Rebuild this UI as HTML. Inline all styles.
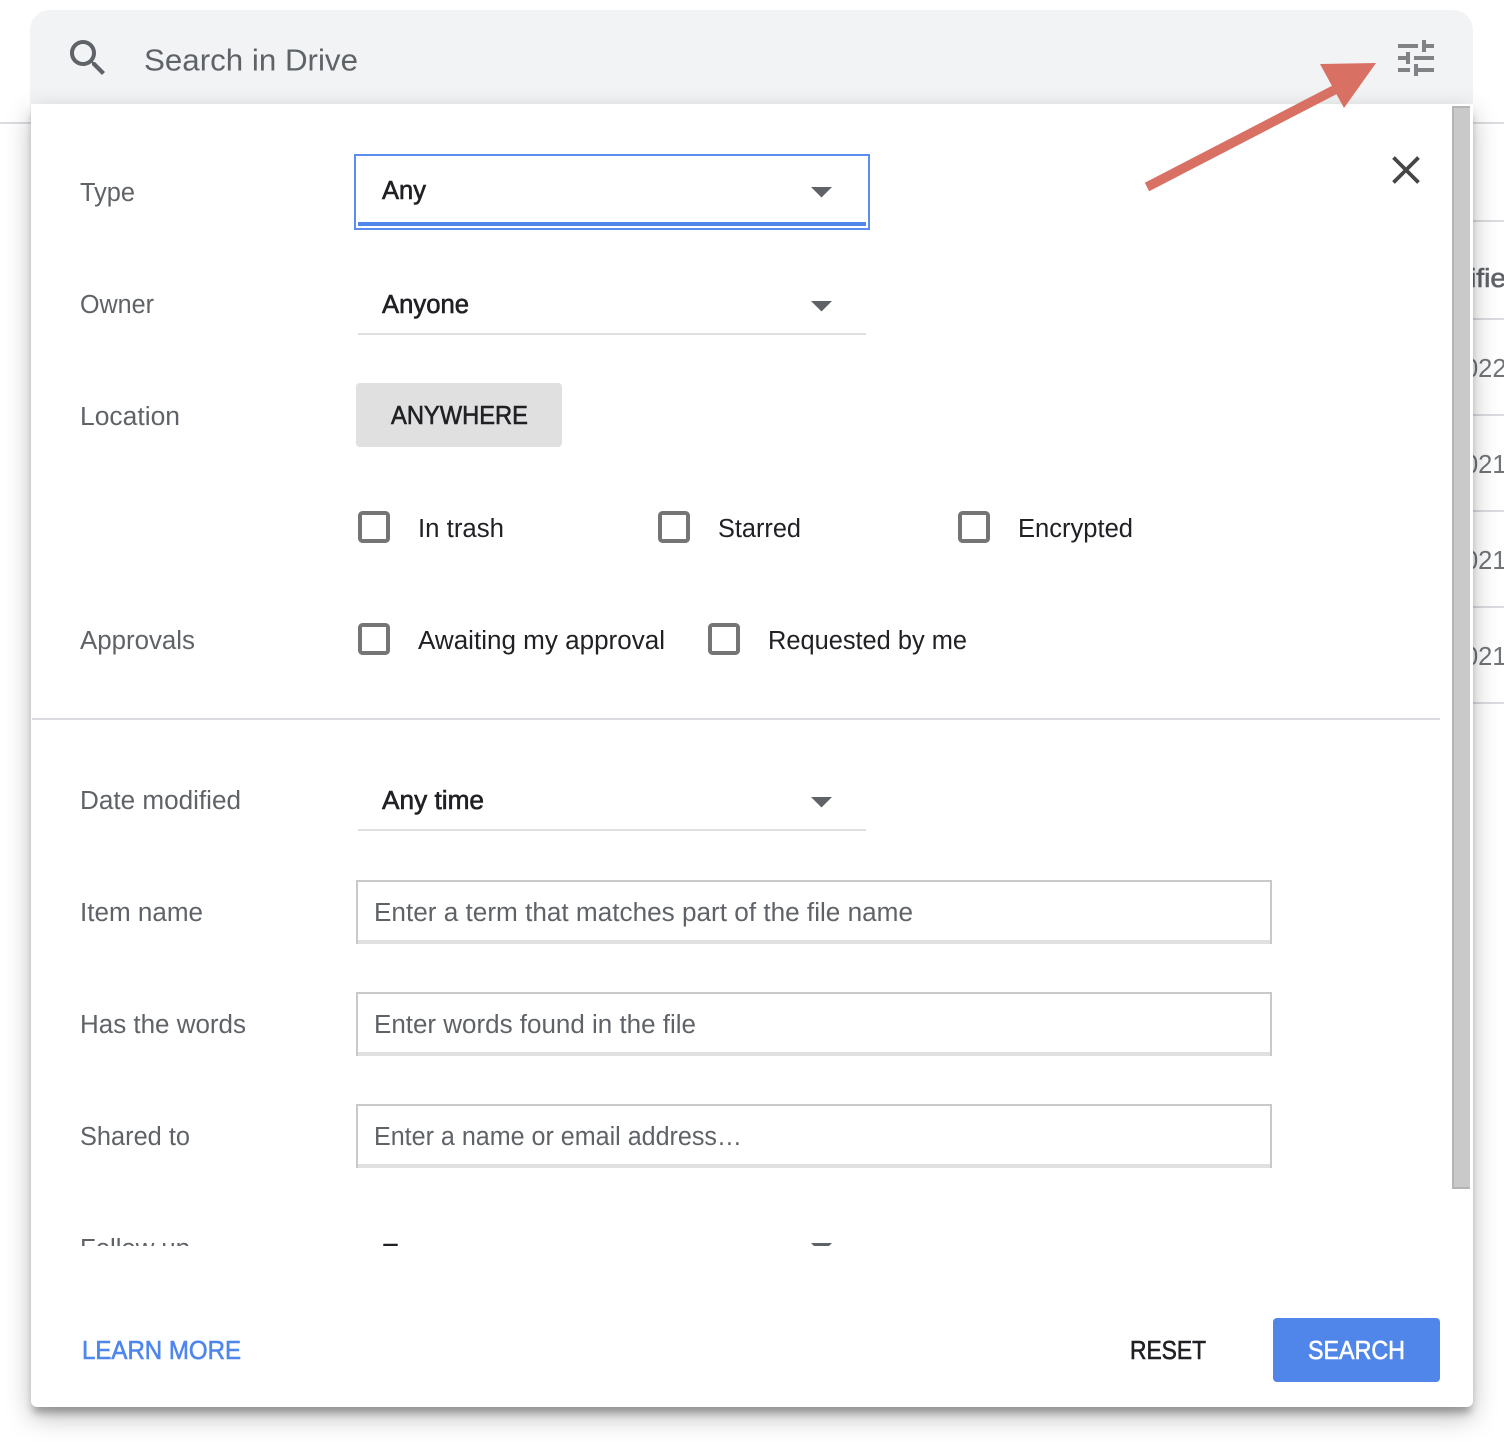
<!DOCTYPE html>
<html><head><meta charset="utf-8"><title>Search in Drive</title>
<style>
html,body{margin:0;padding:0;background:#fff;width:1504px;height:1442px;overflow:hidden}
body{position:relative;font-family:"Liberation Sans",sans-serif}
.a{position:absolute}
svg{position:absolute;left:0;top:0}
text{font-family:"Liberation Sans",sans-serif;font-size:25.5px}
.l{fill:#5f6368}
.v{fill:#202124}
.m{fill:#202124;stroke:#202124;stroke-width:.6px}
</style></head><body>
<svg width="1504" height="1442">
<g fill="#dadce0">
<rect x="0" y="122" width="40" height="2"/>
<rect x="1460" y="122" width="44" height="2"/>
<rect x="1460" y="220" width="44" height="2"/>
<rect x="1460" y="318" width="44" height="2"/>
<rect x="1460" y="414" width="44" height="2"/>
<rect x="1460" y="510" width="44" height="2"/>
<rect x="1460" y="606" width="44" height="2"/>
<rect x="1460" y="702" width="44" height="2"/>
</g>
<text x="1470" y="287" fill="#5f6368" stroke="#5f6368" stroke-width=".6" textLength="36" lengthAdjust="spacingAndGlyphs">ifie</text>
<g fill="#70757a">
<text x="1464" y="377">022</text>
<text x="1464" y="473">021</text>
<text x="1464" y="569">021</text>
<text x="1464" y="665">021</text>
</g>
</svg>
<div class="a" style="left:30px;top:10px;width:1443px;height:110px;background:#f1f3f4;border-radius:20px 20px 0 0"></div>
<div class="a" style="left:31px;top:104px;width:1442px;height:1303px;background:#fff;border-radius:0 0 6px 6px;box-shadow:0 8px 8px -2px rgba(0,0,0,.28),0 10px 26px 0 rgba(0,0,0,.26)"></div>
<svg width="1504" height="1442">
<!-- search icon -->
<path transform="translate(64 34) scale(2)" fill="#5f6368" d="M15.5 14h-.79l-.28-.27C15.41 12.59 16 11.11 16 9.5 16 5.91 13.09 3 9.5 3S3 5.91 3 9.5 5.91 16 9.5 16c1.61 0 3.09-.59 4.23-1.57l.27.28v.79l5 4.99L20.49 19l-4.99-5zm-6 0C7.01 14 5 11.99 5 9.5S7.01 5 9.5 5 14 7.01 14 9.5 11.99 14 9.5 14z"/>
<text x="144" y="70.5" style="font-size:31px" fill="#5f6368" textLength="214" lengthAdjust="spacingAndGlyphs">Search in Drive</text>
<!-- tune icon -->
<path transform="translate(1392 34) scale(2)" fill="#808285" d="M3 17v2h6v-2H3zM3 5v2h10V5H3zm10 16v-2h8v-2h-8v-2h-2v6h2zM7 9v2H3v2h4v2h2V9H7zm14 4v-2H11v2h10zm-6-4h2V7h4V5h-4V3h-2v6z"/>

<!-- scrollbar -->
<rect x="1452" y="106" width="18" height="1083" fill="#b4b4b4"/>
<rect x="1454" y="108" width="16" height="1079" fill="#c9c9c9"/>

<!-- close -->
<path d="M1393.500 157.500L1418.500 182.500M1418.500 157.500L1393.500 182.500" stroke="#444746" stroke-width="3.800" fill="none"/>

<!-- labels -->
<g class="l">
<text x="80" y="201" textLength="55" lengthAdjust="spacingAndGlyphs">Type</text>
<text x="80" y="313" textLength="74" lengthAdjust="spacingAndGlyphs">Owner</text>
<text x="80" y="425" textLength="100" lengthAdjust="spacingAndGlyphs">Location</text>
<text x="80" y="649" textLength="115" lengthAdjust="spacingAndGlyphs">Approvals</text>
<text x="80" y="809" textLength="161" lengthAdjust="spacingAndGlyphs">Date modified</text>
<text x="80" y="921" textLength="123" lengthAdjust="spacingAndGlyphs">Item name</text>
<text x="80" y="1033" textLength="166" lengthAdjust="spacingAndGlyphs">Has the words</text>
<text x="80" y="1145" textLength="110" lengthAdjust="spacingAndGlyphs">Shared to</text>
<text x="80" y="1257" textLength="110" lengthAdjust="spacingAndGlyphs">Follow up</text>
</g>

<!-- type select -->
<rect x="355" y="155" width="514" height="74" fill="none" stroke="#5b8def" stroke-width="2"/>
<rect x="358" y="222" width="508" height="4" fill="#4f86ec"/>
<text class="m" x="382" y="199" textLength="44" lengthAdjust="spacingAndGlyphs">Any</text>
<path d="M811 187h21l-10.500 10.500z" fill="#5f6368"/>

<!-- owner -->
<rect x="358" y="333" width="508" height="2" fill="#e0e0e0"/>
<text class="m" x="382" y="313" textLength="87" lengthAdjust="spacingAndGlyphs">Anyone</text>
<path d="M811 301h21l-10.500 10.500z" fill="#5f6368"/>

<!-- location -->
<rect x="356" y="383" width="206" height="64" rx="4" fill="#e0e0e0"/>
<text class="m" x="391" y="424" textLength="137" lengthAdjust="spacingAndGlyphs">ANYWHERE</text>

<!-- checkboxes -->
<g fill="none" stroke="#757575" stroke-width="4">
<rect x="360" y="513" width="28" height="28" rx="2.500"/>
<rect x="660" y="513" width="28" height="28" rx="2.500"/>
<rect x="960" y="513" width="28" height="28" rx="2.500"/>
<rect x="360" y="625" width="28" height="28" rx="2.500"/>
<rect x="710" y="625" width="28" height="28" rx="2.500"/>
</g>
<g class="v">
<text x="418" y="537" textLength="86" lengthAdjust="spacingAndGlyphs">In trash</text>
<text x="718" y="537" textLength="83" lengthAdjust="spacingAndGlyphs">Starred</text>
<text x="1018" y="537" textLength="115" lengthAdjust="spacingAndGlyphs">Encrypted</text>
<text x="418" y="649" textLength="247" lengthAdjust="spacingAndGlyphs">Awaiting my approval</text>
<text x="768" y="649" textLength="199" lengthAdjust="spacingAndGlyphs">Requested by me</text>
</g>

<rect x="32" y="718" width="1408" height="2" fill="#dadce0"/>

<!-- date modified -->
<rect x="358" y="829" width="508" height="2" fill="#e0e0e0"/>
<text class="m" x="382" y="809" textLength="102" lengthAdjust="spacingAndGlyphs">Any time</text>
<path d="M811 797h21l-10.500 10.500z" fill="#5f6368"/>

<!-- inputs -->
<g>
<rect x="356" y="880" width="916" height="64" fill="#c9c9c9"/><rect x="358" y="882" width="912" height="58" fill="#fff"/><rect x="358" y="940" width="912" height="4" fill="#e0e0e0"/>
<rect x="356" y="992" width="916" height="64" fill="#c9c9c9"/><rect x="358" y="994" width="912" height="58" fill="#fff"/><rect x="358" y="1052" width="912" height="4" fill="#e0e0e0"/>
<rect x="356" y="1104" width="916" height="64" fill="#c9c9c9"/><rect x="358" y="1106" width="912" height="58" fill="#fff"/><rect x="358" y="1164" width="912" height="4" fill="#e0e0e0"/>
</g>
<g class="l">
<text x="374" y="921" textLength="539" lengthAdjust="spacingAndGlyphs">Enter a term that matches part of the file name</text>
<text x="374" y="1033" textLength="322" lengthAdjust="spacingAndGlyphs">Enter words found in the file</text>
<text x="374" y="1145" textLength="368" lengthAdjust="spacingAndGlyphs">Enter a name or email address…</text>
</g>

<!-- clipped follow-up row -->
<text class="m" x="383" y="1262" textLength="15" lengthAdjust="spacingAndGlyphs">T</text>
<path d="M811 1243h21l-10.500 10.500z" fill="#5f6368"/>
<rect x="60" y="1246" width="1300" height="50" fill="#fff"/>

<!-- footer -->
<text x="82" y="1359" fill="#4f86ec" stroke="#4f86ec" stroke-width=".6" textLength="159" lengthAdjust="spacingAndGlyphs">LEARN MORE</text>
<text class="m" x="1130" y="1359" textLength="76" lengthAdjust="spacingAndGlyphs">RESET</text>
<rect x="1273" y="1318" width="167" height="64" rx="4" fill="#5085ea"/>
<text x="1308" y="1359" fill="#fff" stroke="#fff" stroke-width=".6" textLength="97" lengthAdjust="spacingAndGlyphs">SEARCH</text>

<!-- arrow -->
<path d="M1147 187L1340 87" stroke="#d97064" stroke-width="9.500" fill="none"/>
<path d="M1320 64L1376 63L1344 108z" fill="#d97064"/>
</svg>
</body></html>
